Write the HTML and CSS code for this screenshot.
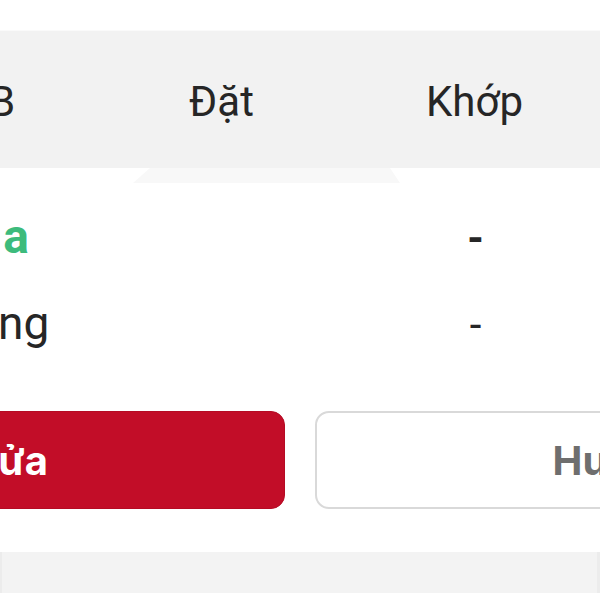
FILE: index.html
```html
<html><head>
<meta charset="UTF-8">
<link rel="stylesheet" href="styles.css">
</head>
<body>
  <div class="page">
    <div class="top-gap"></div>

    <div class="tabs">
      <div class="tab">KL B</div>
      <div class="tab">Đặt</div>
      <div class="tab">Khớp</div>
    </div>
    <div class="pointer"></div>

    <div class="rows">
      <div class="row">
        <div class="label buy">Loại Mua</div>
        <div class="value strong">-</div>
      </div>
      <div class="row">
        <div class="label">Khối lượng</div>
        <div class="value">-</div>
      </div>
    </div>

    <div class="actions">
      <button class="btn btn-red">Sửa</button>
      <button class="btn btn-light">Huỷ</button>
    </div>

    <div class="footer-band"></div>
  </div>
</body></html>
```

FILE: styles.css
```css
body {
    margin: 0;
    background: #ffffff;
    font-family: Roboto, "Liberation Sans", sans-serif;
    color: #262626;
}

* {
    box-sizing: border-box;
}

.page {
    width: 600px;
    height: 600px;
    overflow: hidden;
}

.top-gap {
    height: 31px;
    border-bottom: 1px solid #fafafa;
}

.tabs {
    display: flex;
    align-items: center;
    height: 137px;
    margin-left: -158px;
    background: #f2f2f2;
}

.tab {
    flex: 0 0 253px;
    text-align: center;
    font-size: 42px;
    padding-top: 4px;
}

.tab:first-child {
    padding-left: 8px;
}

.pointer {
    height: 15px;
    width: 267px;
    margin-left: 133px;
    background: #f8f8f8;
    clip-path: polygon(17px 0, 257px 0, 100% 100%, 0 100%);
}

.rows {
    margin-left: -171px;
    padding-top: 24px;
}

.row {
    display: flex;
    align-items: baseline;
    height: 86px;
    font-size: 46px;
    line-height: 60px;
}

.label {
    flex: 1;
    white-space: nowrap;
}

.label.buy {
    color: #3dbb7c;
    font-weight: bold;
    font-size: 48px;
    letter-spacing: 4px;
    word-spacing: -26px;
}

.value {
    flex: 0 0 253px;
    text-align: center;
    margin-right: -2px;
    font-size: 42px;
}

.value.strong {
    font-weight: bold;
}

.actions {
    display: flex;
    gap: 30px;
    margin-left: -265px;
    margin-top: 32px;
}

.btn {
    flex: 0 0 550px;
    height: 98px;
    border-radius: 14px;
    font-family: Inter, Roboto, "Liberation Sans", sans-serif;
    font-size: 40px;
    font-weight: bold;
}

.btn-red {
    background: #c20d28;
    border: 1px solid #b50b24;
    color: #ffffff;
}

.btn-light {
    background: #ffffff;
    border: 2px solid #d9d9d9;
    color: #6e6e6e;
    padding-left: 10px;
}

.footer-band {
    height: 41px;
    margin-top: 43px;
    background: #f3f3f3;
    border-left: 2px solid #ececec;
    border-right: 3px solid #ececec;
}
```
